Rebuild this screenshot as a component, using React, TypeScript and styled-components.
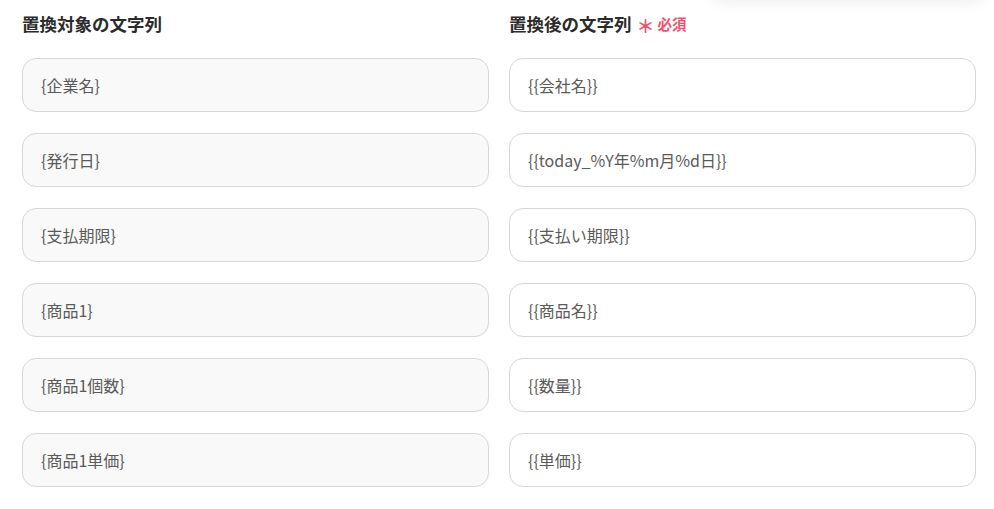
import React from 'react';
import styled, { createGlobalStyle } from 'styled-components';

const GlobalStyle = createGlobalStyle`
  body {
    margin: 0;
    background: #ffffff;
    font-family: "Noto Sans CJK JP", "Noto Sans", sans-serif;
  }
`;

const Page = styled.div`
  position: relative;
  width: 994px;
  height: 509px;
  overflow: hidden;
  box-sizing: border-box;
  padding: 10px 18px 0 22px;
`;

// the bottom edge of a popup sitting above the viewport
const PopupEdge = styled.div`
  position: absolute;
  top: -40px;
  left: 712px;
  width: 272px;
  height: 40px;
  background: #fff;
  border-radius: 12px;
  box-shadow: 0 4px 14px rgba(0, 0, 0, 0.06);
`;

const Grid = styled.div`
  display: grid;
  grid-template-columns: 467px 467px;
  column-gap: 20px;
`;

const Column = styled.div`
  display: flex;
  flex-direction: column;
`;

const Label = styled.div`
  display: flex;
  align-items: center;
  height: 26px;
  margin-bottom: 22px;
  font-size: 17.5px;
  font-weight: 700;
  color: #2b2b2b;
`;

const Required = styled.span`
  margin-left: 5px;
  font-size: 14.5px;
  font-weight: 700;
  color: #f0506e;
  display: flex;
  align-items: center;
  gap: 3px;
`;

const Asterisk = styled.span`
  font-size: 18px;
  line-height: 1;
  margin-top: 4px;
`;

const Fields = styled.div`
  display: flex;
  flex-direction: column;
  gap: 21px;
`;

const Field = styled.div<{ $filled?: boolean }>`
  box-sizing: border-box;
  height: 54px;
  display: flex;
  align-items: center;
  padding: 0 18px;
  border: 1px solid #d6d6dc;
  border-radius: 14px;
  background: ${({ $filled }) => ($filled ? '#f9f9f9' : '#ffffff')};
  font-size: 16px;
  color: #5a5a5a;
`;

const sources = ['{企業名}', '{発行日}', '{支払期限}', '{商品1}', '{商品1個数}', '{商品1単価}'];
const targets = [
  '{{会社名}}',
  '{{today_%Y年%m月%d日}}',
  '{{支払い期限}}',
  '{{商品名}}',
  '{{数量}}',
  '{{単価}}',
];

export default function App() {
  return (
    <>
      <GlobalStyle />
      <Page>
        <PopupEdge />
        <Grid>
          <Column>
            <Label>置換対象の文字列</Label>
            <Fields>
              {sources.map((s) => (
                <Field key={s} $filled>
                  {s}
                </Field>
              ))}
            </Fields>
          </Column>
          <Column>
            <Label>
              置換後の文字列
              <Required>
                <Asterisk>＊</Asterisk>必須
              </Required>
            </Label>
            <Fields>
              {targets.map((t) => (
                <Field key={t}>{t}</Field>
              ))}
            </Fields>
          </Column>
        </Grid>
      </Page>
    </>
  );
}
